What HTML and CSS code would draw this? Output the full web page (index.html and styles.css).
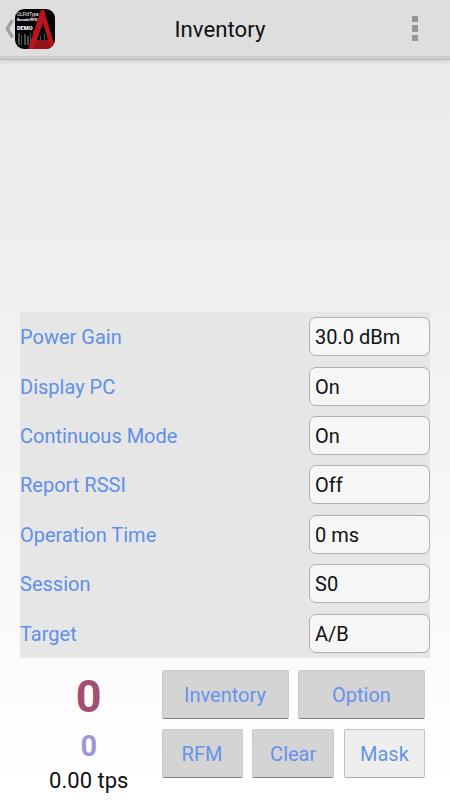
FILE: index.html
```html
<!DOCTYPE html>
<html lang="en">
<head>
<meta charset="utf-8">
<title>Inventory</title>
<link rel="stylesheet" href="styles.css">
</head>
<body>
<div class="screen">
  <header class="bar">
    <div class="home">
      <svg class="back" viewBox="0 0 9 20" width="9" height="20"><path d="M7.5 1L2.3 9.7L7.5 18.5" fill="none" stroke="#a0a0a0" stroke-width="3.4"/></svg>
      <div class="logo">
        <svg viewBox="0 0 40 40" width="40" height="40">
          <path d="M3 24h2v12H3zM6 26h1v10H6zM9 25h2v11H9zM12 27h2v9h-2zM15 24h1v10h-1zM18 22h1v8h-1zM25 27h1v4h-1zM29 25h1v6h-1z" fill="#4b4e51"/>
          <path d="M26 1h3l11 37v2H13zM28 14l-6 17h11z" fill="#b8141c" fill-rule="evenodd"/>
          <path d="M22 31h11l3 9H18z" fill="#94131a"/>
        </svg>
        <span class="logo-type">OLFiitType</span>
        <span class="logo-sub">Barcode/RFID</span>
        <span class="logo-demo">DEMO</span>
      </div>
    </div>
    <h1 class="title">Inventory</h1>
    <div class="more"><i></i><i></i><i></i></div>
  </header>
  <main class="list"></main>
  <section class="settings">
    <div class="row"><span>Power Gain</span><div class="field">30.0 dBm</div></div>
    <div class="row"><span>Display PC</span><div class="field">On</div></div>
    <div class="row"><span>Continuous Mode</span><div class="field">On</div></div>
    <div class="row"><span>Report RSSI</span><div class="field">Off</div></div>
    <div class="row"><span>Operation Time</span><div class="field">0 ms</div></div>
    <div class="row"><span>Session</span><div class="field">S0</div></div>
    <div class="row"><span>Target</span><div class="field">A/B</div></div>
  </section>
  <footer class="footer">
    <div class="counts">
      <div class="total">0</div>
      <div class="unique">0</div>
      <div class="speed">0.00 tps</div>
    </div>
    <div class="actions">
      <div class="line two"><div class="btn">Inventory</div><div class="btn">Option</div></div>
      <div class="line three"><div class="btn">RFM</div><div class="btn">Clear</div><div class="btn light">Mask</div></div>
    </div>
  </footer>
</div>
</body>
</html>
```
FILE: styles.css
```css
* { box-sizing: border-box; }
body { margin: 0; font-family: Roboto, "Liberation Sans", sans-serif; color: #111; }
.screen {
  width: 450px; height: 800px; overflow: hidden;
  display: flex; flex-direction: column;
  background: linear-gradient(#eaeaea 56px, #f0f0f0 300px, #fbfbfb 650px, #fff 800px);
}
.bar {
  height: 60px; flex: none;
  display: grid; grid-template-columns: 100px 1fr 100px; align-items: center;
  padding-bottom: 3px;
  background: linear-gradient(#dedede 56px, #cfcfcf 56px, #cbcbcb 59px, #bcbcbc 59px);
  box-shadow: 0 1px 5px #c8c8c8;
}
.home { display: flex; align-items: center; padding-left: 5px; gap: 1px; }
.logo { position: relative; width: 40px; height: 40px; border-radius: 9px; background: #050505; overflow: hidden; color: #fff; }
.logo svg { display: block; }
.logo span { position: absolute; left: 2px; line-height: 1; white-space: nowrap; }
.logo-type { top: 4px; font-size: 4.6px; }
.logo-sub { top: 10px; font-size: 3.3px; font-weight: 700; }
.logo-demo { top: 17px; font-size: 5.6px; font-weight: 900; }
.title { margin: 0; text-align: center; font-size: 22.2px; font-weight: 400; line-height: 26px; padding: 1px 10px 0 0; }
.more { justify-self: end; margin-right: 32px; display: grid; gap: 3px; }
.more i { width: 6px; height: 6.4px; background: #969696; }
.list { height: 252px; flex: none; }
.settings { flex: none; margin: 0 20px; height: 346px; background: #e6e6e6; display: grid; grid-template-rows: repeat(7, 1fr); }
.row { display: flex; align-items: center; justify-content: space-between; color: #5f8fe8; font-size: 20px; padding-top: 1px; }
.field { width: 121px; height: 39px; margin-bottom: 1.2px; border: 1px solid #aeaeae; border-radius: 7px; background: #f6f6f6; color: #111; padding: 1px 0 0 5px; line-height: 37px; }
.footer { display: flex; height: 142px; }
.counts { width: 161.5px; padding: 13px 0 0 16px; text-align: center; }
.total { font-size: 45px; font-weight: 700; line-height: 52px; color: #a44f70; }
.unique { font-size: 29px; font-weight: 700; line-height: 34px; margin-top: 6px; margin-bottom: 5px; color: #9c98d2; }
.speed { font-size: 22px; line-height: 26px; }
.actions { width: 264px; padding-top: 12px; display: flex; flex-direction: column; gap: 10px; }
.line { display: grid; }
.two { grid-template-columns: 127px 127px; column-gap: 9.5px; }
.three { grid-template-columns: 81px 82px 81px; column-gap: 9.7px; }
.btn { height: 49px; background: #d4d4d4; border: 1px solid #cacaca; border-bottom: 1px solid #808080; border-radius: 2px; color: #6493ea; font-size: 20px; line-height: 49px; text-align: center; }
.light { background: #eee; border-color: #c4c4c4; border-bottom-color: #aaa; }
```
